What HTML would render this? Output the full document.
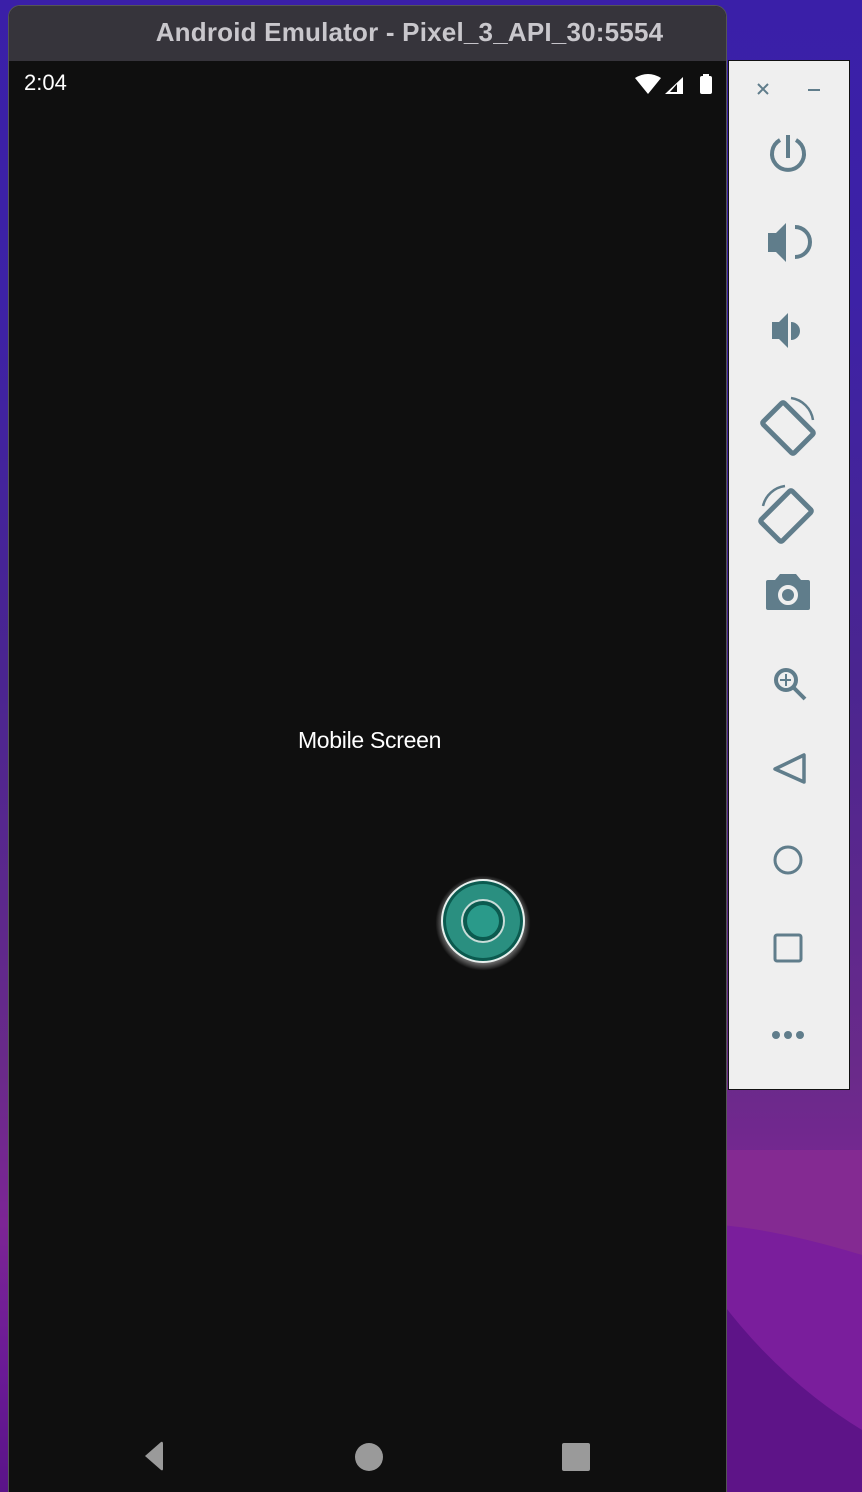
<!DOCTYPE html>
<html><head><meta charset="utf-8"><style>
html,body{margin:0;padding:0;width:862px;height:1492px;overflow:hidden}
#wrap{position:absolute;left:0;top:0;width:862px;height:1492px;overflow:hidden;font-family:"Liberation Sans",sans-serif;
background:linear-gradient(180deg,#3a1fa8 0%,#3d22a6 20%,#4a2590 45%,#6a2a8a 72%,#7c2595 82%,#6a1a96 92%,#5a1488 100%);}
.win{position:absolute;left:8px;top:5px;width:719px;height:1487px;background:#0f0f0f;border-radius:12px 12px 0 0;border:1px solid #555;border-bottom:none;box-sizing:border-box;overflow:hidden}
.title{height:55px;background:#36343b;color:#c9c7cc;font-weight:bold;font-size:26px;line-height:52px;text-align:center;padding-left:84px;letter-spacing:.2px}
.time{position:absolute;left:15px;top:64px;color:#fff;font-size:22px}
.txt{position:absolute;left:0;width:719px;top:721px;text-align:center;color:#fff;font-size:23px;padding-left:1px;letter-spacing:-0.3px}
.side{position:absolute;left:728px;top:60px;width:122px;height:1030px;background:#efefef;border:1px solid #111;box-sizing:border-box}
.side svg{position:absolute}
</style></head><body><div id="wrap">
<svg style="position:absolute;left:720px;top:1090px" width="142" height="402">
<rect x="0" y="60" width="142" height="342" fill="#842a92"/>
<path d="M0 135 Q60 140 142 165 L142 402 L0 402 Z" fill="#7a1e9c"/>
<path d="M0 210 Q60 290 142 340 L142 402 L0 402 Z" fill="#5e1488"/>
</svg>
<div class="win">
<div class="title">Android Emulator - Pixel_3_API_30:5554</div>
<div class="time">2:04</div>
<svg style="position:absolute;left:624px;top:66px" width="90" height="26">
<path d="M2 6 Q15 -2 28 6 L15 22 Z" fill="#fff"/>
<path d="M50 5 L50 22 L32 22 Z" fill="#fff"/><path d="M44 12 L44 20 L37 20Z" fill="#0f0f0f"/>
<rect x="67" y="4" width="12" height="18" rx="2" fill="#fff"/><rect x="70" y="2" width="6" height="3" fill="#fff"/>
</svg>
<div class="txt">Mobile Screen</div>
<div style="position:absolute;left:426px;top:869px;width:96px;height:96px;border-radius:50%;background:radial-gradient(circle,rgba(255,255,255,.9) 45%,rgba(255,255,255,0) 70%)"></div>
<div style="position:absolute;left:432px;top:873px;width:84px;height:84px;border-radius:50%;background:#2a8f80;border:2px solid #e8f0ee;box-sizing:border-box;box-shadow:inset 0 0 0 3px #0b5a4f"></div>
<div style="position:absolute;left:454px;top:895px;width:40px;height:40px;border-radius:50%;background:#2a9a8a;border:4px solid #0b5a4f;box-sizing:border-box;box-shadow:0 0 0 2px #c8dcd8"></div>
<svg style="position:absolute;left:130px;top:1430px" width="460" height="40">
<path d="M6 20 L22 6 Q24 5 24 8 L24 33 Q24 35 22 34 Z" fill="#9a9a9a"/>
<circle cx="230" cy="21" r="14" fill="#9a9a9a"/>
<rect x="423" y="7" width="28" height="28" rx="2" fill="#9a9a9a"/>
</svg>
</div>
<div class="side">
<svg width="122" height="1030" viewBox="0 0 122 1030" style="left:-1px;top:-1px">
<g stroke="#607d8b" fill="none" stroke-width="3">
<path d="M30 24 L40 34 M40 24 L30 34" stroke-width="2"/>
<path d="M80 30 L92 30" stroke-width="2"/>
<path d="M52 80 A16 16 0 1 0 68 80" stroke-width="4"/><path d="M60 75 L60 98" stroke-width="4"/>
<path d="M67 167 A14 14 0 0 1 67 197" stroke-width="4"/>
<circle cx="58" cy="620" r="10" stroke-width="4"/><path d="M66 628 L77 639" stroke-width="4"/>
<path d="M52 620 L63 620 M58 614 L58 626" stroke-width="2"/>
<path d="M76 695 L76 722 L47 709 Z" stroke-width="3.5" stroke-linejoin="round"/>
<circle cx="60" cy="800" r="13" stroke-width="3"/>
<rect x="47" y="875" width="26" height="26" rx="2" stroke-width="3"/>
</g>
<g fill="#607d8b">
<path d="M40 173 L48 173 L58 163 L58 202 L48 192 L40 192 Z"/><rect x="59" y="166" width="3" height="34" fill="#efefef"/>
<path d="M44 262 L51 262 L60 253 L60 288 L51 279 L44 279 Z"/><path d="M63 262 A8 8 0 0 1 63 280 Z"/>
<circle cx="48" cy="975" r="4"/><circle cx="60" cy="975" r="4"/><circle cx="72" cy="975" r="4"/>
<path d="M47 520 L52 514 L68 514 L73 520 L80 520 Q82 520 82 522 L82 548 Q82 550 80 550 L40 550 Q38 550 38 548 L38 522 Q38 520 40 520 Z"/>
</g>
<circle cx="60" cy="535" r="8" fill="none" stroke="#efefef" stroke-width="4"/>
<g stroke="#607d8b" fill="none" stroke-width="5" stroke-linejoin="round">
<rect x="45" y="346" width="30" height="44" rx="2" transform="rotate(-45 60 368)"/>
<rect x="43" y="434" width="30" height="44" rx="2" transform="rotate(45 58 456)"/>
</g>
<g stroke="#607d8b" fill="none" stroke-width="2.5">
<path d="M63 338 A26 26 0 0 1 85 360"/>
<path d="M35 446 A26 26 0 0 1 57 426"/>
</g>
</svg>
</div>
</div></body></html>
